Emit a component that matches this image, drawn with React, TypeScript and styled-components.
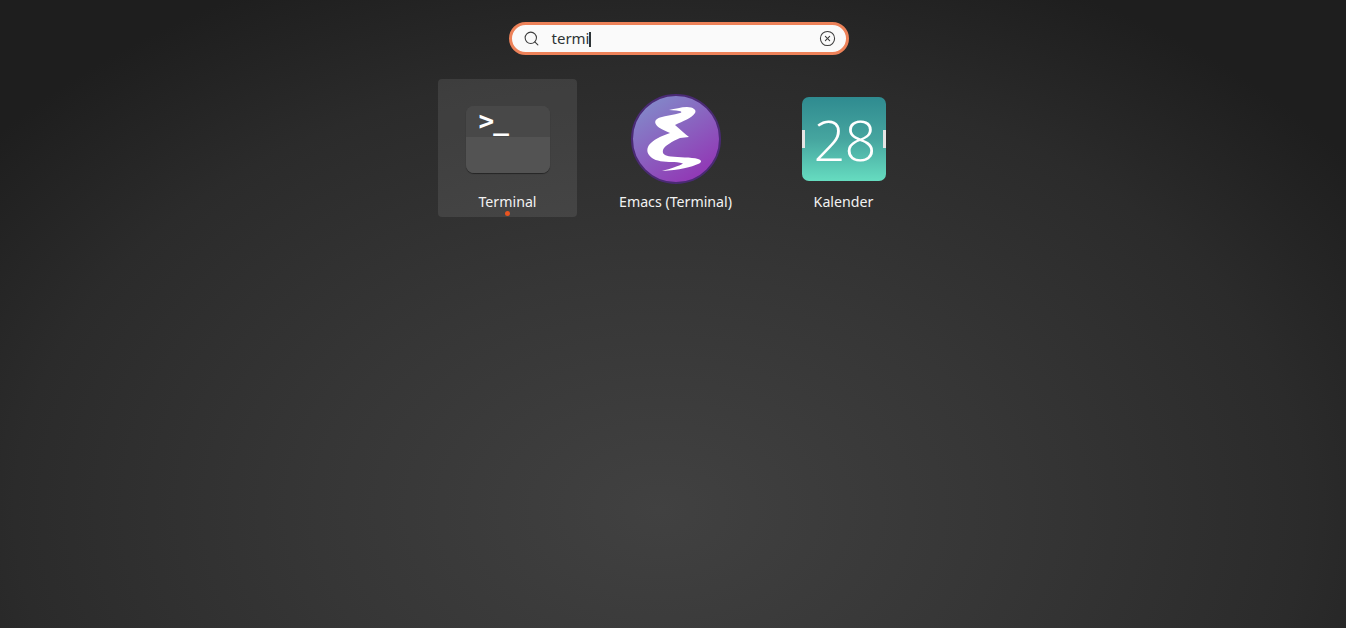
import styled, { createGlobalStyle } from "styled-components";
import { Search, CircleX } from "lucide-react";

const GlobalStyle = createGlobalStyle`
  html, body {
    margin: 0;
    height: 100%;
    overflow: hidden;
  }
  body {
    font-family: "Noto Sans", "Open Sans", sans-serif;
  }
`;

const Desktop = styled.div`
  width: 1346px;
  height: 628px;
  display: flex;
  flex-direction: column;
  align-items: center;
  box-sizing: border-box;
  padding-top: 22px;
  background: radial-gradient(ellipse 860px 590px at 660px 510px, #414141 0%, #363636 40%, #2b2b2b 75%, #1e1e1e 100%);
`;

const SearchBar = styled.div`
  width: 340px;
  height: 33px;
  margin-left: 11px;
  box-sizing: border-box;
  display: flex;
  align-items: center;
  padding: 0 10px 0 11px;
  background: #fafafa;
  border: 3px solid #ed8259;
  border-radius: 17px;
  color: #3d3d3d;
`;

const SearchText = styled.span`
  flex: 1;
  margin-left: 12px;
  font-size: 15px;
  color: #2e3436;
  line-height: 1;
`;

const Caret = styled.span`
  display: inline-block;
  width: 1.5px;
  height: 15px;
  background: #2e3436;
  vertical-align: -3px;
`;

const ResultGrid = styled.div`
  display: grid;
  grid-template-columns: repeat(3, 139px);
  column-gap: 29px;
  margin-top: 24px;
  margin-left: 5px;
`;

const Tile = styled.div<{ $focused?: boolean }>`
  position: relative;
  height: 138px;
  display: flex;
  flex-direction: column;
  align-items: center;
  border-radius: 4px;
  background: ${(p) => (p.$focused ? "rgba(255,255,255,0.09)" : "transparent")};
`;

const IconSlot = styled.div`
  height: 114px;
  box-sizing: border-box;
  padding-top: 6px;
  display: flex;
  align-items: center;
  justify-content: center;
`;

const TileLabel = styled.span`
  font-size: 14.2px;
  line-height: 18px;
  color: #f2f2f2;
`;

const RunningDot = styled.span`
  position: absolute;
  bottom: 1px;
  left: 50%;
  margin-left: -2.5px;
  width: 5px;
  height: 5px;
  border-radius: 50%;
  background: #e95420;
`;

const TerminalIcon = styled.div`
  width: 84px;
  height: 67px;
  box-sizing: border-box;
  border-radius: 8px;
  overflow: hidden;
  display: flex;
  flex-direction: column;
  box-shadow: 0 1px 1px rgba(0, 0, 0, 0.45), inset 0 0 0 1px rgba(255, 255, 255, 0.07);
`;

const TerminalTop = styled.div`
  height: 31px;
  background: #484848;
  color: #fff;
  box-sizing: border-box;
  padding: 0 0 0 13px;
  font-family: "DejaVu Sans Mono", monospace;
  font-size: 26px;
  font-weight: 700;
  line-height: 30px;
  letter-spacing: -1px;
`;

const TerminalBottom = styled.div`
  flex: 1;
  background: #535353;
`;

const CalendarIcon = styled.div`
  position: relative;
  width: 84px;
  height: 84px;
  box-sizing: border-box;
  padding-left: 2px;
  border-radius: 7px;
  display: flex;
  align-items: center;
  justify-content: center;
  background: linear-gradient(#2f8b90 0%, #46a59f 50%, #66dcc0 100%);
  color: #fff;
  font-family: "Open Sans", sans-serif;
  font-size: 56px;
  font-weight: 300;
  letter-spacing: -1px;
`;

const CalendarHinge = styled.span<{ $side: "left" | "right" }>`
  position: absolute;
  top: 33px;
  ${(p) => p.$side}: 0;
  width: 3px;
  height: 18px;
  background: #e4e4e4;
`;

function EmacsIcon() {
  return (
    <svg width="90" height="90" viewBox="0 0 90 90">
      <defs>
        <linearGradient id="emacsFill" x1="0.2" y1="0.1" x2="0.75" y2="0.95">
          <stop offset="0" stopColor="#8385c8" />
          <stop offset="1" stopColor="#9237b5" />
        </linearGradient>
      </defs>
      <circle cx="45" cy="45" r="44" fill="url(#emacsFill)" stroke="#4a2a74" strokeWidth="2" />
      <path
        d="M38 16 C44 15 50 13 56 13 C62 13 66 16 64 19 C61 24 52 27 44 31 C49 35 54 40 58 43 L49 44 C42 47 33 52 32 56 C31 60 34 62 40 62.5 C48 63.5 60 63 67 65 C71 66 71 68.5 67 70 C61 73 48 76 31 77 C40 74.5 48 72 52 69.5 C48 68 44 68 41 68 C33 68 25 67 21 64 C16 60 15 56 18 51 C22 46 30 42 39 39 C33 36 27 34 25 30.5 C23 27 25 25 29 23.5 C35 21.5 43 21 49 19 C52 18 50 17 45 16.5 Z"
        fill="#fff"
      />
    </svg>
  );
}

export default function App() {
  return (
    <Desktop>
      <GlobalStyle />
      <SearchBar>
        <Search size={17} strokeWidth={1.5} />
        <SearchText>
          termi
          <Caret />
        </SearchText>
        <CircleX size={17} strokeWidth={1.5} />
      </SearchBar>
      <ResultGrid>
        <Tile $focused>
          <IconSlot>
            <TerminalIcon>
              <TerminalTop>&gt;_</TerminalTop>
              <TerminalBottom />
            </TerminalIcon>
          </IconSlot>
          <TileLabel>Terminal</TileLabel>
          <RunningDot />
        </Tile>
        <Tile>
          <IconSlot>
            <EmacsIcon />
          </IconSlot>
          <TileLabel>Emacs (Terminal)</TileLabel>
        </Tile>
        <Tile>
          <IconSlot>
            <CalendarIcon>
              <CalendarHinge $side="left" />
              28
              <CalendarHinge $side="right" />
            </CalendarIcon>
          </IconSlot>
          <TileLabel>Kalender</TileLabel>
        </Tile>
      </ResultGrid>
    </Desktop>
  );
}
